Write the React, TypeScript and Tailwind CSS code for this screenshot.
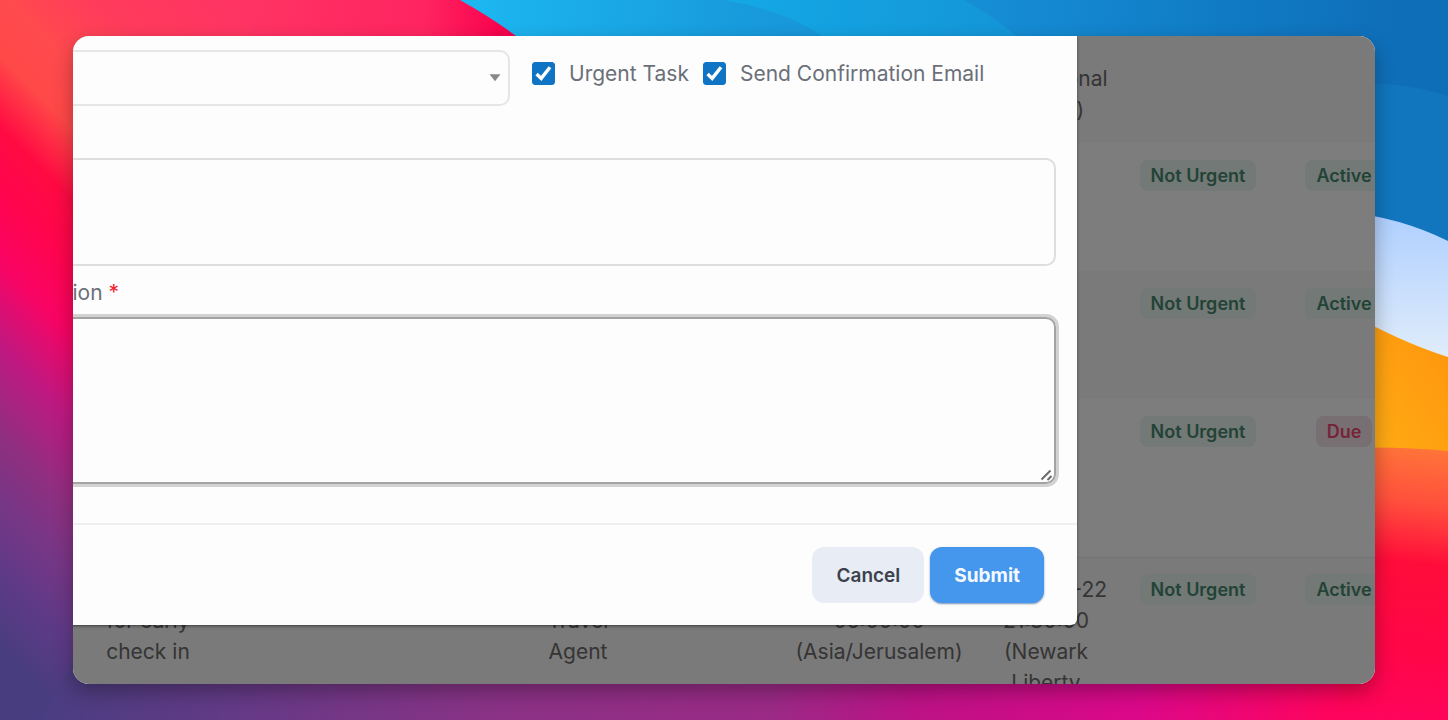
import { useState } from "react";
import type { ReactNode } from "react";
import clsx from "clsx";

function Wallpaper() {
  return (
    <svg
      className="absolute inset-0 h-full w-full"
      viewBox="0 0 1448 720"
      preserveAspectRatio="none"
      aria-hidden="true"
    >
      <defs>
        <linearGradient id="left" gradientUnits="userSpaceOnUse" x1="250" y1="0" x2="-200" y2="450">
          <stop offset="0" stopColor="#ff3364" />
          <stop offset="0.17" stopColor="#ff3b5c" />
          <stop offset="0.27" stopColor="#ff4a4e" />
          <stop offset="0.34" stopColor="#ff4848" />
          <stop offset="0.42" stopColor="#ff0a42" />
          <stop offset="0.5" stopColor="#ff0450" />
          <stop offset="0.57" stopColor="#f80464" />
          <stop offset="0.66" stopColor="#c01880" />
          <stop offset="0.76" stopColor="#902f80" />
          <stop offset="0.83" stopColor="#783686" />
          <stop offset="0.91" stopColor="#5f3a86" />
          <stop offset="1" stopColor="#483d7e" />
        </linearGradient>
        <linearGradient id="top" gradientUnits="userSpaceOnUse" x1="250" y1="0" x2="520" y2="0">
          <stop offset="0" stopColor="#ff3364" />
          <stop offset="0.65" stopColor="#ff2460" />
          <stop offset="0.9" stopColor="#fa0650" />
          <stop offset="1" stopColor="#ee0048" />
        </linearGradient>
        <linearGradient id="bottom" gradientUnits="userSpaceOnUse" x1="40" y1="0" x2="1448" y2="0">
          <stop offset="0" stopColor="#493d80" />
          <stop offset="0.14" stopColor="#643a86" />
          <stop offset="0.32" stopColor="#8a3286" />
          <stop offset="0.52" stopColor="#9b2a86" />
          <stop offset="0.62" stopColor="#bc1286" />
          <stop offset="0.78" stopColor="#dc088a" />
          <stop offset="0.92" stopColor="#ff045c" />
        </linearGradient>
        <linearGradient id="blue" gradientUnits="userSpaceOnUse" x1="460" y1="0" x2="1400" y2="0">
          <stop offset="0" stopColor="#1cb8f2" />
          <stop offset="0.3" stopColor="#189bdc" />
          <stop offset="0.55" stopColor="#168ed6" />
          <stop offset="0.8" stopColor="#107cc6" />
          <stop offset="1" stopColor="#0f6eb8" />
        </linearGradient>
        <linearGradient id="band" gradientUnits="userSpaceOnUse" x1="730" y1="0" x2="1010" y2="0">
          <stop offset="0" stopColor="#14a8e6" />
          <stop offset="1" stopColor="#1496d8" />
        </linearGradient>
        <linearGradient id="pale" x1="0" y1="0" x2="0" y2="1">
          <stop offset="0" stopColor="#aecfff" />
          <stop offset="1" stopColor="#e4effa" />
        </linearGradient>
        <linearGradient id="amber" x1="1" y1="0" x2="0" y2="1">
          <stop offset="0" stopColor="#ff930c" />
          <stop offset="1" stopColor="#ffb216" />
        </linearGradient>
        <linearGradient id="ember" gradientUnits="userSpaceOnUse" x1="1420" y1="448" x2="1390" y2="720">
          <stop offset="0" stopColor="#ff7439" />
          <stop offset="0.2" stopColor="#ff503c" />
          <stop offset="0.42" stopColor="#ff0c3a" />
          <stop offset="0.75" stopColor="#ff0648" />
          <stop offset="1" stopColor="#ff045c" />
        </linearGradient>
      </defs>
      <rect width="1448" height="720" fill="url(#left)" />
      <rect x="250" width="400" height="80" fill="url(#top)" />
      <path d="M73 660H1448V720H40Z" fill="url(#bottom)" />
      <path d="M460 0Q492 18 516 36L600 90H1340V300H1448V0Z" fill="url(#blue)" />
      <path d="M724 0Q784 10 822 36H1016Q990 14 964 0Z" fill="url(#band)" />
      <path d="M1340 84Q1400 80 1448 96V300H1340Z" fill="#1176be" />
      <path d="M1340 211Q1400 217 1448 241V370H1340Z" fill="url(#pale)" />
      <path d="M1340 308Q1400 342 1448 357V470H1340Z" fill="url(#amber)" />
      <path d="M1340 448Q1400 446 1448 451V720H1340Z" fill="url(#ember)" />
    </svg>
  );
}

function Badge({ tone, children }: { tone: "green" | "red"; children: ReactNode }) {
  return (
    <span
      className={clsx(
        "mx-auto block w-fit rounded-lg px-[11px] text-[18px] font-semibold whitespace-nowrap",
        tone === "green" && "bg-[#e4f2ee] text-[#47866a]",
        tone === "red" && "bg-[#eedfe2] text-[#ee4672]",
      )}
    >
      {children}
    </span>
  );
}

type Task = {
  note: string[];
  owner: string[];
  local: string[];
  remote: string[];
  status: "Active" | "Due" | null;
  padding: string;
};

const tasks: Task[] = [
  {
    note: [],
    owner: [],
    local: [],
    remote: ["International", "Airport)"],
    status: null,
    padding: "pt-[27px] pb-[18px]",
  },
  { note: [], owner: [], local: [], remote: [], status: "Active", padding: "pt-[17px] pb-20" },
  { note: [], owner: [], local: [], remote: [], status: "Active", padding: "pt-[17px] pb-20" },
  { note: [], owner: [], local: [], remote: [], status: "Due", padding: "pt-[17px] pb-[110px]" },
  {
    note: ["Call hotel", "for early", "check in"],
    owner: ["Senior", "Travel", "Agent"],
    local: ["2024-05-23", "05:00:00", "(Asia/Jerusalem)"],
    remote: ["2024-05-22", "21:30:00", "(Newark", "Liberty"],
    status: "Active",
    padding: "pt-[17px] pb-4",
  },
];

function Lines({ items }: { items: string[] }) {
  return (
    <>
      {items.map((line) => (
        <span key={line} className="block whitespace-nowrap">
          {line}
        </span>
      ))}
    </>
  );
}

function TaskTable() {
  return (
    <table className="w-[calc(100%+38px)] table-fixed border-collapse text-center text-[21px] leading-[31px] text-[#6a6a6a]">
      <colgroup>
        <col className="w-[150px]" />
        <col />
        <col className="w-[150px]" />
        <col className="w-[134px]" />
        <col className="w-[184px]" />
        <col className="w-[150px]" />
        <col className="w-[154px]" />
        <col className="w-[138px]" />
      </colgroup>
      <tbody>
        {tasks.map((task, index) => (
          <tr
            key={index}
            className={clsx(
              "align-top",
              index % 2 === 0 ? "bg-[#f4f4f4]" : "bg-[#fafafa]",
              index === 4 && "shadow-[inset_0_1px_0_#e6e6e6]",
            )}
          >
            <td className={task.padding}><Lines items={task.note} /></td>
            <td />
            <td className={task.padding}><Lines items={task.owner} /></td>
            <td />
            <td className={task.padding}><Lines items={task.local} /></td>
            <td className={task.padding}><Lines items={task.remote} /></td>
            <td className={task.padding}>{task.status && <Badge tone="green">Not Urgent</Badge>}</td>
            <td className={task.padding}>
              {task.status && <Badge tone={task.status === "Due" ? "red" : "green"}>{task.status}</Badge>}
            </td>
          </tr>
        ))}
      </tbody>
    </table>
  );
}

function Check({ label }: { label: string }) {
  const [on, setOn] = useState(true);
  return (
    <label className="flex items-center gap-[14px] whitespace-nowrap">
      <span className="grid size-[23px] shrink-0 place-items-center">
        <input
          type="checkbox"
          checked={on}
          onChange={() => setOn(!on)}
          className="col-start-1 row-start-1 size-[23px] appearance-none rounded-[3px] border border-[#0f74c4] checked:bg-[#0f74c4]"
        />
        {on && (
          <svg viewBox="0 0 23 23" className="pointer-events-none col-start-1 row-start-1 size-[23px]">
            <path d="M4.6 12L9.2 16.4L18 5.2" fill="none" stroke="#fff" strokeWidth="3.4" />
          </svg>
        )}
      </span>
      {label}
    </label>
  );
}

function TaskDialog() {
  return (
    <form
      role="dialog"
      aria-label="Task"
      onSubmit={(event) => event.preventDefault()}
      className="absolute top-0 right-[298px] -left-[104px] rounded-b-[6px] bg-[#fdfdfd] text-[21px] leading-[23px] text-[#6b6f78] shadow-[0_1px_3px_rgba(0,0,0,0.5)]"
    >
      <div className="pt-[14px] pr-[21px] pl-5">
        <div className="flex items-start gap-[22px]">
          <div className="grid w-[521px] items-center">
            <select
              aria-label="Assignee"
              className="col-start-1 row-start-1 h-14 appearance-none rounded-[10px] border-2 border-[#e6e6e6] bg-transparent px-4"
            >
              <option></option>
            </select>
            <svg
              viewBox="0 0 12 8"
              className="pointer-events-none col-start-1 row-start-1 mr-[9px] h-2 w-3 justify-self-end"
            >
              <path d="M0.5 0.2H11.5L6 7.2Z" fill="#888" />
            </svg>
          </div>
          <div className="flex gap-[14px] pt-3">
            <Check label="Urgent Task" />
            <Check label="Send Confirmation Email" />
          </div>
        </div>
        <textarea
          aria-label="Summary"
          className="mt-[52px] block h-[108px] w-full resize-none rounded-[10px] border-2 border-[#dedede] p-4 outline-none"
        />
        <label htmlFor="description" className="mt-3 block leading-[30px]">
          Description <span className="text-[#f0202c]">*</span>
        </label>
        <div className="relative mt-[9px]">
          <textarea
            id="description"
            className="block h-[167px] w-full resize-none rounded-[10px] border-2 border-[#a3a3a3] p-4 shadow-[0_0_0_3px_#d2d2d2] outline-none"
          />
          <svg viewBox="0 0 14 14" className="pointer-events-none absolute right-[2px] bottom-[2px] size-[14px]">
            <path d="M1.5 11.5L10.5 2.5M7.5 12L11.5 8" fill="none" stroke="#6a6a6a" strokeWidth="2" />
          </svg>
        </div>
      </div>
      <div className="mt-[39px] flex justify-end gap-[6px] border-t-2 border-[#efefef] py-[22px] pr-[33px] text-[19px]">
        <button type="button" className="h-14 rounded-xl bg-[#e8edf5] px-6 font-semibold text-[#3c414d]">
          Cancel
        </button>
        <button
          type="submit"
          className="h-14 rounded-xl bg-[#4596ed] px-6 font-bold text-[#f4f9ff] shadow-[0_1px_2px_rgba(30,70,130,0.6)]"
        >
          Submit
        </button>
      </div>
    </form>
  );
}

export default function App() {
  return (
    <div className="relative h-screen overflow-hidden px-[73px] py-9 font-['Inter',sans-serif]">
      <Wallpaper />
      <main className="relative h-full overflow-hidden rounded-2xl bg-[#f4f4f4] shadow-[0_8px_20px_rgba(0,0,0,0.3)]">
        <TaskTable />
        <div className="absolute inset-0 bg-black/50" />
        <TaskDialog />
      </main>
    </div>
  );
}
